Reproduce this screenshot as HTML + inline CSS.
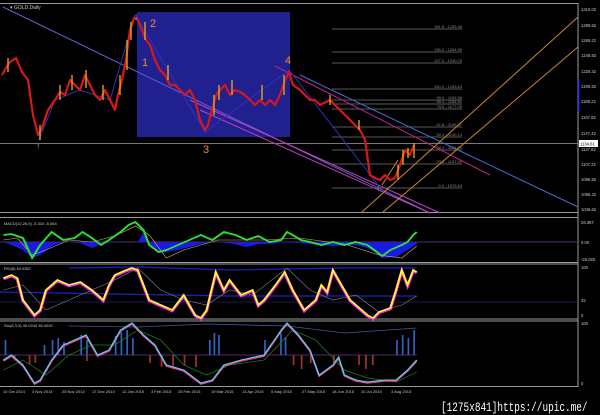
<!DOCTYPE html>
<html><head><style>
html,body{margin:0;padding:0;background:#000;}
body{width:600px;height:415px;overflow:hidden;position:relative;font-family:"Liberation Sans",sans-serif;}
svg{position:absolute;left:0;top:0}
</style></head><body>
<svg width="600" height="415" viewBox="0 0 600 415" xmlns="http://www.w3.org/2000/svg" font-family="Liberation Sans, sans-serif">
<rect width="600" height="415" fill="#000"/>
<g stroke="#9a9a9a" stroke-width="1" fill="none">
<line x1="0" y1="3.5" x2="578" y2="3.5"/>
<line x1="0" y1="212.5" x2="578" y2="212.5"/>
<line x1="0" y1="217.5" x2="578" y2="217.5"/>
<line x1="0" y1="262.5" x2="578" y2="262.5"/>
<line x1="0" y1="264" x2="578" y2="264"/>
<line x1="0" y1="319" x2="578" y2="319"/>
<line x1="0" y1="321" x2="578" y2="321"/>
<line x1="0" y1="386.5" x2="578" y2="386.5"/>
<line x1="578" y1="3" x2="578" y2="387"/>
</g>
<rect x="137" y="12" width="153" height="125" fill="#20208f"/>
<line x1="0" y1="143.5" x2="578" y2="143.5" stroke="#777" stroke-width="1"/>
<g stroke="#777" stroke-width="0.8">
<line x1="332" y1="29" x2="462" y2="29"/><line x1="332" y1="52" x2="462" y2="52"/>
<line x1="332" y1="63" x2="462" y2="63"/><line x1="332" y1="89" x2="462" y2="89"/>
<line x1="332" y1="100" x2="462" y2="100"/><line x1="332" y1="104" x2="462" y2="104"/>
<line x1="332" y1="109" x2="462" y2="109"/><line x1="332" y1="127" x2="462" y2="127"/>
<line x1="332" y1="137" x2="462" y2="137"/><line x1="332" y1="150" x2="462" y2="150"/>
<line x1="332" y1="164" x2="462" y2="164"/><line x1="332" y1="188" x2="462" y2="188"/>
</g>
<g fill="#8a8a8a" font-size="4" text-anchor="end">
<text x="462" y="28">161.8 - 1295.46</text><text x="462" y="51">138.2 - 1254.95</text>
<text x="462" y="62">127.2 - 1240.75</text><text x="462" y="88">100.0 - 1205.63</text>
<text x="462" y="99">90.0 - 1192.96</text><text x="462" y="103">85.4 - 1184.61</text>
<text x="462" y="108">78.6 - 1177.05</text><text x="462" y="126">61.8 - 1155.37</text>
<text x="462" y="136">50.0 - 1140.13</text><text x="462" y="149">38.2 - 1124.91</text>
<text x="462" y="163">23.6 - 1107.00</text><text x="462" y="187">0.0 - 1075.63</text>
</g>
<g fill="none" stroke-width="1">
<line x1="3" y1="7" x2="430" y2="213" stroke="#6a5acd"/>
<line x1="200" y1="110" x2="430" y2="213" stroke="#c040c0"/>
<line x1="190" y1="100" x2="440" y2="213" stroke="#c040c0"/>
<line x1="300" y1="75" x2="578" y2="207" stroke="#4a6acd"/>
<line x1="275" y1="66" x2="490" y2="175" stroke="#c02090"/>
<line x1="362" y1="212" x2="578" y2="17" stroke="#c8882a"/>
<line x1="383" y1="212" x2="578" y2="47" stroke="#c8882a"/>
<line x1="382" y1="185" x2="398" y2="160" stroke="#c8882a"/>
<polyline points="39,140 55,100 80,90 110,100 135,15 205,132 289,70 378,185" stroke="#3030c0"/>
</g>
<polyline fill="none" stroke="#d81818" stroke-width="2.2" stroke-linejoin="round" points="2,75 6,68 10,62 16,58 22,72 28,80 33,115 38,135 42,128 48,110 55,100 60,92 65,95 70,80 75,85 80,90 85,75 90,85 95,95 100,100 105,90 110,100 115,110 118,95 122,80 126,60 130,30 134,18 138,20 142,30 146,40 150,45 155,60 160,70 165,75 170,85 175,85 180,90 185,95 190,90 195,100 200,120 205,130 208,125 212,110 216,95 220,90 225,85 230,95 235,90 240,92 245,95 250,100 255,105 260,100 265,105 270,100 275,105 280,95 285,80 289,72 293,85 300,90 305,95 310,100 315,100 320,105 330,100 340,110 345,115 350,120 355,125 360,130 365,140 370,175 375,178 380,180 385,175 390,180 395,178 400,165 405,150 410,155 414,145"/>
<g stroke="#e8b020" stroke-width="1.3">
<line x1="8" y1="58" x2="8" y2="72"/><line x1="40" y1="125" x2="40" y2="140"/><line x1="60" y1="85" x2="60" y2="100"/><line x1="72" y1="75" x2="72" y2="90"/><line x1="86" y1="70" x2="86" y2="88"/><line x1="103" y1="85" x2="103" y2="100"/><line x1="120" y1="75" x2="120" y2="95"/><line x1="127" y1="40" x2="127" y2="70"/><line x1="131" y1="22" x2="131" y2="40"/><line x1="145" y1="22" x2="145" y2="40"/><line x1="168" y1="65" x2="168" y2="80"/><line x1="214" y1="95" x2="214" y2="115"/><line x1="219" y1="85" x2="219" y2="100"/><line x1="232" y1="80" x2="232" y2="95"/><line x1="262" y1="85" x2="262" y2="100"/><line x1="284" y1="75" x2="284" y2="95"/><line x1="330" y1="95" x2="330" y2="105"/><line x1="359" y1="120" x2="359" y2="130"/><line x1="398" y1="165" x2="398" y2="180"/><line x1="403" y1="150" x2="403" y2="165"/><line x1="408" y1="148" x2="408" y2="158"/><line x1="414" y1="143" x2="414" y2="158"/>
</g>
<g fill="#e8902a" font-size="11">
<text x="150" y="27">2</text><text x="142" y="66">1</text><text x="203" y="153">3</text><text x="285" y="64">4</text>
</g>
<g fill="#5aa0ff" font-size="9"><text x="134" y="19">↓</text><text x="36" y="149">↑</text><text x="376" y="191">↑</text></g>
<text x="10" y="9" fill="#ccc" font-size="5">▾ GOLD,Daily</text>
<g fill="#c8c8c8" font-size="4.2">
<text x="581" y="11">1310.02</text><text x="581" y="27">1289.62</text><text x="581" y="42">1269.22</text><text x="581" y="57">1248.82</text><text x="581" y="73">1228.42</text><text x="581" y="88">1208.62</text><text x="581" y="103">1188.22</text><text x="581" y="119">1167.82</text><text x="581" y="135">1147.42</text><text x="581" y="151">1127.62</text><text x="581" y="166">1107.22</text><text x="581" y="181">1086.82</text><text x="581" y="196">1066.42</text><text x="581" y="211">1046.62</text>
</g>
<rect x="579" y="140" width="19" height="7" fill="#fff"/>
<text x="580" y="145.5" fill="#000" font-size="4.2">1134.61</text>
<line x1="578.5" y1="80" x2="578.5" y2="112" stroke="#3030ff" stroke-width="1.5"/>
<line x1="0" y1="242" x2="578" y2="242" stroke="#6a3a8a" stroke-width="0.8"/>
<line x1="0" y1="302" x2="578" y2="302" stroke="#20206a" stroke-width="0.8"/>
<g transform="scale(1.148,1)">
<polygon fill="#1a1ae0" points="3,242 10,245 20,250 28,258 35,255 45,246 55,242 70,243 80,248 90,243 105,242 120,242 125,232 130,245 138,253 145,252 155,250 165,247 175,244 185,242 200,243 215,247 225,244 235,244 250,242 270,244 290,246 310,245 320,248 326,252 333,258 345,257 355,250 363,244 363,242"/>
<polyline fill="none" stroke="#d0b060" stroke-width="0.6" points="3,240 15,238 28,255 40,250 60,240 80,242 100,236 118,226 130,235 145,258 160,250 190,240 230,240 260,238 300,244 330,255 350,258 363,246"/>
<polyline fill="none" stroke="#30e030" stroke-width="1.8" points="3,235 10,234 20,238 28,258 35,245 45,232 55,240 65,238 72,232 80,238 88,245 95,240 105,232 112,225 118,222 125,230 130,245 138,252 145,250 155,245 165,240 175,235 185,240 195,232 205,235 215,240 225,236 235,242 245,240 250,232 255,235 262,240 270,242 280,245 290,242 300,245 310,242 320,245 326,250 333,256 340,250 350,245 355,242 360,235 363,232"/>
<polyline fill="none" stroke="#2020c0" stroke-width="1.2" points="60,268 120,267 200,270 250,269 300,268 363,268"/>
<polyline fill="none" stroke="#2020c0" stroke-width="1.2" points="0,292 100,294 200,296 300,296 363,296"/>
<polyline fill="none" stroke="#808080" stroke-width="0.6" points="3,290 20,285 40,310 60,300 80,290 100,280 120,268 140,290 160,300 180,305 200,290 220,295 250,268 270,290 290,300 310,295 330,312 350,305 363,296"/>
<polyline fill="none" stroke="#ff20ff" stroke-width="2.6" points="3,279 10,276 15,279 20,301 30,316 35,311 40,291 45,286 50,281 60,286 70,283 80,291 90,301 95,286 100,276 110,271 115,269 120,271 125,286 130,301 140,306 150,311 160,296 170,316 175,319 180,311 188,273 195,291 200,281 210,296 220,291 225,306 230,301 240,286 248,273 255,291 260,301 265,311 275,301 280,286 285,293 290,271 295,281 300,291 305,301 310,306 320,316 325,319 330,313 340,309 345,291 350,271 355,286 360,271 363,273"/>
<polyline fill="none" stroke="#ffff20" stroke-width="1.6" points="3,278 10,275 15,278 20,300 30,315 35,310 40,290 45,285 50,280 60,285 70,282 80,290 90,300 95,285 100,275 110,270 115,268 120,270 125,285 130,300 140,305 150,310 160,295 170,315 175,318 180,310 188,272 195,290 200,280 210,295 220,290 225,305 230,300 240,285 248,272 255,290 260,300 265,310 275,300 280,285 285,292 290,270 295,280 300,290 305,300 310,305 320,315 325,318 330,312 340,308 345,290 350,270 355,285 360,270 363,272"/>
<line x1="0" y1="355" x2="363" y2="355" stroke="#6a3a8a" stroke-width="0.8"/>
<polyline fill="none" stroke="#5050a0" stroke-width="0.8" points="60,326 120,327 180,324 250,326 300,333 363,328"/>
<g fill="#3060c0">
<rect x="4" y="340" width="1.5" height="15"/><rect x="38" y="345" width="1.5" height="10"/><rect x="45" y="340" width="1.5" height="15"/><rect x="50" y="338" width="1.5" height="17"/><rect x="55" y="342" width="1.5" height="13"/><rect x="70" y="335" width="1.5" height="20"/><rect x="75" y="340" width="1.5" height="15"/><rect x="100" y="336" width="1.5" height="19"/><rect x="105" y="332" width="1.5" height="23"/><rect x="110" y="330" width="1.5" height="25"/><rect x="115" y="338" width="1.5" height="17"/><rect x="182" y="340" width="1.5" height="15"/><rect x="186" y="333" width="1.5" height="22"/><rect x="190" y="335" width="1.5" height="20"/><rect x="230" y="340" width="1.5" height="15"/><rect x="244" y="333" width="1.5" height="22"/><rect x="248" y="337" width="1.5" height="18"/><rect x="345" y="340" width="1.5" height="15"/><rect x="350" y="335" width="1.5" height="20"/><rect x="355" y="338" width="1.5" height="17"/><rect x="360" y="330" width="1.5" height="25"/>
</g>
<g fill="#a03030">
<rect x="12" y="355" width="1.5" height="5"/><rect x="25" y="355" width="1.5" height="9"/><rect x="30" y="355" width="1.5" height="8"/><rect x="75" y="355" width="1.5" height="6"/><rect x="130" y="355" width="1.5" height="8"/><rect x="140" y="355" width="1.5" height="12"/><rect x="150" y="355" width="1.5" height="14"/><rect x="160" y="355" width="1.5" height="10"/><rect x="170" y="355" width="1.5" height="12"/><rect x="255" y="355" width="1.5" height="10"/><rect x="262" y="355" width="1.5" height="14"/><rect x="270" y="355" width="1.5" height="8"/><rect x="290" y="355" width="1.5" height="8"/><rect x="312" y="355" width="1.5" height="10"/><rect x="318" y="355" width="1.5" height="14"/><rect x="324" y="355" width="1.5" height="10"/>
</g>
<polyline fill="none" stroke="#208020" stroke-width="0.7" points="3,370 20,360 40,375 60,355 80,345 100,345 120,330 140,340 160,365 180,375 200,365 230,360 255,330 275,340 300,370 320,378 345,382 363,372"/>
<polyline fill="none" stroke="#ff3090" stroke-width="1.6" points="3,361 10,356 20,366 30,384 35,381 45,361 55,346 65,341 75,336 85,356 95,351 105,331 115,324 125,336 135,346 145,366 160,371 175,384 185,381 195,366 210,361 230,356 245,331 250,324 260,336 270,351 278,376 290,366 295,358 300,376 310,381 320,383 335,381 345,381 355,371 363,361"/>
<polyline fill="none" stroke="#40e0f0" stroke-width="1.1" points="3,360 10,355 20,365 30,383 35,380 45,360 55,345 65,340 75,335 85,355 95,350 105,330 115,323 125,335 135,345 145,365 160,370 175,383 185,380 195,365 210,360 230,355 245,330 250,323 260,335 270,350 278,375 290,365 295,357 300,375 310,380 320,382 335,380 345,380 355,370 363,360"/>
</g>
<text x="4" y="225" fill="#ccc" font-size="4">MACD(12,26,9) -5.310 -5.064</text>
<g fill="#c8c8c8" font-size="4.2"><text x="581" y="224">28.367</text><text x="581" y="244">0.00</text><text x="581" y="261">-25.025</text></g>
<text x="4" y="270" fill="#ccc" font-size="4">RSI(8) 63.6357</text>
<g fill="#c8c8c8" font-size="4.2"><text x="581" y="269">100</text><text x="581" y="302">32</text><text x="581" y="317">0</text></g>
<text x="4" y="327" fill="#ccc" font-size="4">Sto(8,3,3) 40.0244 35.4020</text>
<g fill="#c8c8c8" font-size="4.2"><text x="581" y="325">100</text><text x="581" y="385">0</text></g>
<g fill="#c8c8c8" font-size="4">
<text x="3" y="393">10 Oct 2014</text><text x="32" y="393">3 Nov 2014</text><text x="62" y="393">25 Nov 2014</text><text x="92" y="393">17 Dec 2014</text><text x="122" y="393">12 Jan 2015</text><text x="151" y="393">3 Feb 2015</text><text x="178" y="393">25 Feb 2015</text><text x="211" y="393">19 Mar 2015</text><text x="242" y="393">13 Apr 2015</text><text x="271" y="393">5 May 2015</text><text x="302" y="393">27 May 2015</text><text x="332" y="393">18 Jun 2015</text><text x="361" y="393">10 Jul 2015</text><text x="391" y="393">3 Aug 2015</text>
</g>
<text transform="translate(441,411) scale(1,1.35)" fill="#fff" font-size="9.4" font-family="Liberation Mono, monospace">[1275x841]https://upic.me/</text>
</svg>
</body></html>
